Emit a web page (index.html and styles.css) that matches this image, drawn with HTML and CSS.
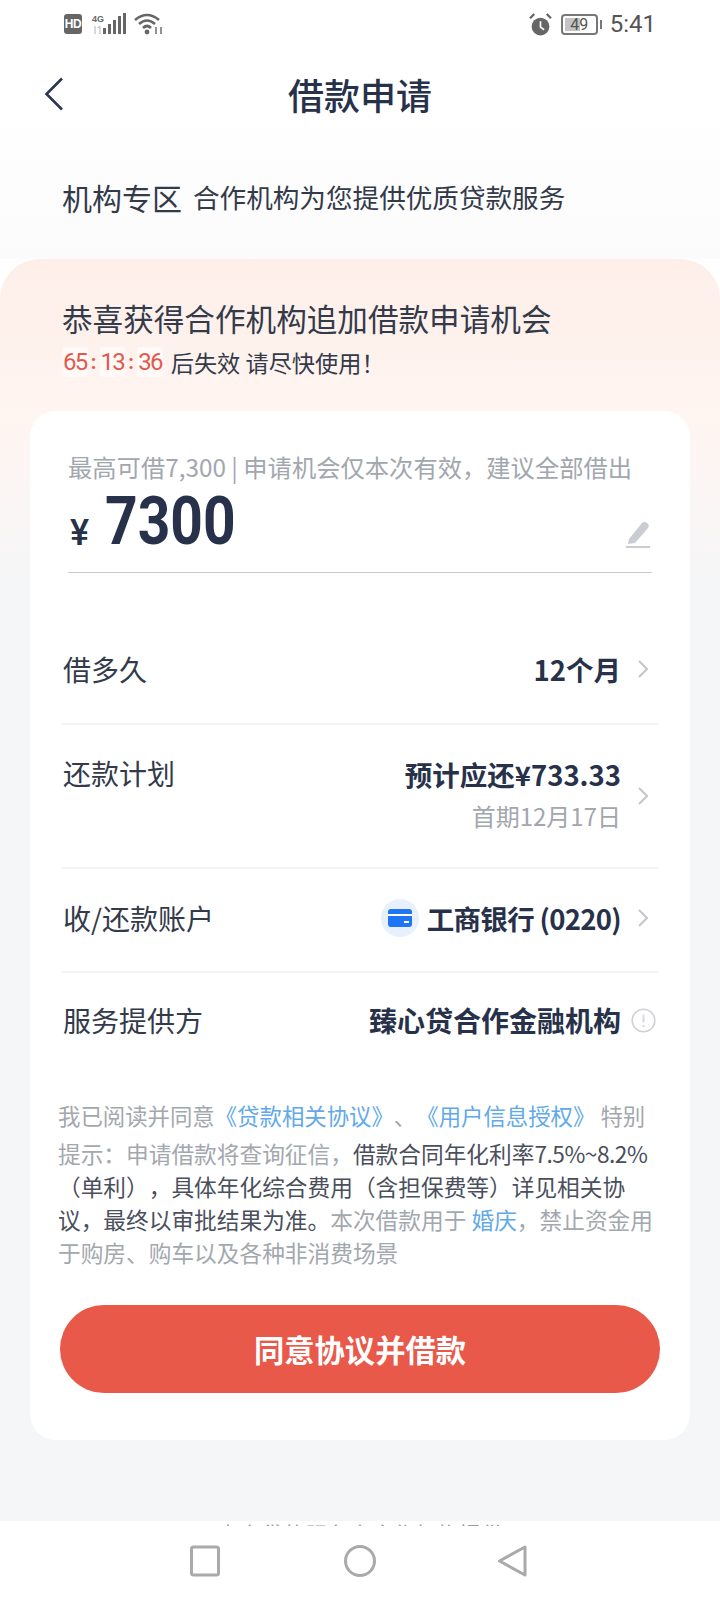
FILE: index.html

```html
<!DOCTYPE html>
<html lang="zh-CN">
<head>
  <meta charset="UTF-8">
  <title>借款申请</title>
  <link rel="stylesheet" href="styles.css">
</head>
<body>
<div class="page">
  <div class="top">
    <div class="status">
      <div class="status-left">
        <span class="hd">HD</span>
        <span class="net">4G</span>
        <svg class="signal" width="34" height="22" viewBox="0 0 34 22">
          <path d="M3 13v8M8 13v8M6 15l2-2" fill="none" stroke="#c8c8c8" stroke-width="1.4"/>
          <rect x="11" y="15" width="3" height="6" fill="#666"/>
          <rect x="16" y="11" width="3" height="10" fill="#666"/>
          <rect x="21" y="7" width="3" height="14" fill="#666"/>
          <rect x="26" y="3" width="3" height="18" fill="#666"/>
          <rect x="31" y="0" width="3" height="21" fill="#666"/>
        </svg>
        <svg class="wifi" width="30" height="22" viewBox="0 0 30 22">
          <path d="M1 7 Q13 -3 25 7" fill="none" stroke="#666" stroke-width="2.6"/>
          <path d="M5 11 Q13 4 21 11" fill="none" stroke="#666" stroke-width="2.6"/>
          <path d="M9 15 Q13 11 17 15" fill="none" stroke="#666" stroke-width="2.6"/>
          <circle cx="13" cy="19" r="2.4" fill="#666"/>
          <path d="M22 14v7M27 14v7" stroke="#666" stroke-width="1.4"/>
        </svg>
      </div>
      <div class="status-right">
        <svg width="23" height="23" viewBox="0 0 22 22">
          <circle cx="11" cy="13" r="8.5" fill="#666"/>
          <path d="M11 8v5.5l3.5 2.5" fill="none" stroke="#fff" stroke-width="1.6"/>
          <path d="M1 5l4-4M21 5l-4-4" stroke="#666" stroke-width="2.2"/>
        </svg>
        <span class="battery"><span class="battery-fill"></span><span class="battery-num">49</span></span>
        <span class="battery-nub"></span>
        <span class="clock">5:41</span>
      </div>
    </div>
    <div class="nav">
      <svg class="back" width="20" height="34" viewBox="0 0 20 34">
        <path d="M18 1.5 L2.5 17 L18 32.5" fill="none" stroke="#2b3650" stroke-width="2.6"/>
      </svg>
      <h1>借款申请</h1>
      <span></span>
    </div>
    <div class="zone">
      <span class="zone-name">机构专区</span>
      <span class="zone-sub">合作机构为您提供优质贷款服务</span>
    </div>
  </div>

  <div class="panel">
    <h2>恭喜获得合作机构追加借款申请机会</h2>
    <div class="timer">
      <span class="cell">65</span><span class="sep">:</span><span class="cell">13</span><span class="sep">:</span><span class="cell">36</span>
      <span class="timer-text">后失效 请尽快使用！</span>
    </div>

    <div class="card">
      <div class="amount-box">
        <div class="hint">最高可借7,300 | 申请机会仅本次有效，建议全部借出</div>
        <div class="amount">
          <span class="yen">¥</span>
          <span class="num">7300</span>
          <svg class="pencil" width="24" height="28" viewBox="0 0 24 28">
            <path d="M3 19 L16 3 Q18 1 21 3 Q24 5 22 8 L9 23 L2 24 Z" fill="#c9ccd1"/>
            <rect x="0" y="26" width="24" height="2" fill="#c9ccd1"/>
          </svg>
        </div>
      </div>

      <div class="rows">
        <div class="row row-term">
          <span class="label">借多久</span>
          <div class="value"><b>12个月</b>
            <svg class="arrow" width="10" height="18" viewBox="0 0 10 18"><path d="M1 1l8 8-8 8" fill="none" stroke="#c2c5ca" stroke-width="2"/></svg>
          </div>
        </div>
        <div class="row row-plan">
          <span class="label">还款计划</span>
          <div class="value">
            <div class="plan">
              <b>预计应还¥733.33</b>
              <span class="plan-sub">首期12月17日</span>
            </div>
            <svg class="arrow" width="10" height="18" viewBox="0 0 10 18"><path d="M1 1l8 8-8 8" fill="none" stroke="#c2c5ca" stroke-width="2"/></svg>
          </div>
        </div>
        <div class="row row-bank">
          <span class="label">收/还款账户</span>
          <div class="value">
            <span class="bank-icon">
              <svg width="24" height="18" viewBox="0 0 24 18">
                <rect width="24" height="18" rx="3" fill="#1f75f5"/>
                <rect y="5" width="24" height="2" fill="#fff"/>
                <rect x="16" y="12" width="5" height="2" fill="#fff"/>
              </svg>
            </span>
            <b>工商银行 (0220)</b>
            <svg class="arrow" width="10" height="18" viewBox="0 0 10 18"><path d="M1 1l8 8-8 8" fill="none" stroke="#c2c5ca" stroke-width="2"/></svg>
          </div>
        </div>
        <div class="row row-org">
          <span class="label">服务提供方</span>
          <div class="value"><b>臻心贷合作金融机构</b>
            <svg width="25" height="25" viewBox="0 0 25 25">
              <circle cx="12.5" cy="12.5" r="11.3" fill="none" stroke="#cfd1d5" stroke-width="1.6"/>
              <path d="M12.5 6.5v8" stroke="#d6d8db" stroke-width="2"/>
              <circle cx="12.5" cy="18" r="1.2" fill="#d6d8db"/>
            </svg>
          </div>
        </div>
      </div>

      <div class="agree">
        <p class="agree-first">我已阅读并同意<a>《贷款相关协议》</a>、<a>《用户信息授权》</a> 特别</p>
        <p>提示：申请借款将查询征信，<span class="dark">借款合同年化利率<span class="pct">7.5%~8.2%</span><br>（单利），具体年化综合费用（含担保费等）详见相关协<br>议，最终以审批结果为准。</span>本次借款用于 <a>婚庆</a>，禁止资金用<br>于购房、购车以及各种非消费场景</p>
      </div>

      <button class="submit">同意协议并借款</button>
    </div>
  </div>

  <div class="footnote">本次贷款服务由合作机构提供</div>

  <div class="navbar">
    <svg width="30" height="32" viewBox="0 0 30 32"><rect x="1.5" y="2" width="27" height="28" rx="2" fill="none" stroke="#aaa" stroke-width="3"/></svg>
    <svg width="32" height="32" viewBox="0 0 32 32"><circle cx="16" cy="16" r="14.5" fill="none" stroke="#aaa" stroke-width="3"/></svg>
    <svg class="nav-back" width="30" height="32" viewBox="0 0 30 32"><path d="M27 2 V30 L1.5 16 Z" fill="none" stroke="#aaa" stroke-width="3" stroke-linejoin="round"/></svg>
  </div>
</div>
</body>
</html>
```

FILE: styles.css

```css
* { box-sizing: border-box; }
body {
  margin: 0;
  font-family: "Noto Sans CJK SC", "Noto Sans", sans-serif;
  color: #27324a;
}
h1, h2, p { margin: 0; font-weight: normal; }
.page {
  width: 720px;
  height: 1600px;
  overflow: hidden;
  background: #fff;
}

/* top */
.top {
  height: 259px;
  background: linear-gradient(#fff 40%, #fbfbfb);
}
.status {
  height: 48px;
  display: flex;
  justify-content: space-between;
  align-items: center;
  padding: 0 64px 0 64px;
}
.status-left, .status-right { display: flex; align-items: center; }
.hd {
  width: 18px;
  height: 20px;
  background: #666;
  border-radius: 3px;
  color: #fff;
  font: bold 12px/20px "Liberation Sans", sans-serif;
  letter-spacing: -0.5px;
  text-align: center;
}
.net {
  align-self: flex-start;
  width: 0;
  margin: 1px 0 0 10px;
  font: bold 9px/10px "Liberation Sans", sans-serif;
  color: #666;
}
.wifi { margin-left: 8px; }
.battery {
  display: inline-block;
  position: relative;
  width: 37px;
  height: 21px;
  margin-left: 9px;
  border: 2px solid #777;
  border-radius: 4px;
}
.battery-fill {
  position: absolute;
  left: 2px;
  top: 2px;
  bottom: 2px;
  width: 15px;
  background: #c4c4c4;
}
.battery-num {
  position: absolute;
  inset: 0;
  font: 16px/17px "Roboto", sans-serif;
  text-align: center;
  color: #555;
}
.battery-nub {
  width: 2px;
  height: 9px;
  margin-left: 2px;
  background: #777;
}
.clock {
  margin-left: 8px;
  font: 24px/30px "Roboto", sans-serif;
  color: #555;
}
.nav {
  height: 92px;
  display: grid;
  grid-template-columns: 1fr auto 1fr;
  align-items: center;
  padding: 0 44px;
}
.nav h1 {
  font-size: 36px;
  line-height: 46px;
  font-weight: 500;
}
.zone {
  height: 113px;
  display: flex;
  align-items: center;
  gap: 11px;
  padding-left: 62px;
  color: #333a4a;
}
.zone-name { font-size: 30px; line-height: 40px; }
.zone-sub { font-size: 26.6px; line-height: 40px; }

/* panel */
.panel {
  height: 1262px;
  padding: 39px 30px 0;
  border-radius: 40px 40px 0 0;
  background: linear-gradient(#fdeee8, #fff5f1 160px, #f5f6f8 330px);
}
.panel h2 {
  margin-left: 32px;
  font-size: 30.6px;
  line-height: 40px;
  color: #333a4a;
}
.timer {
  display: flex;
  align-items: center;
  height: 36px;
  margin: 6px 0 31px 32px;
}
.cell {
  padding: 0 1px;
  background: #fffaf7;
  border-radius: 3px;
  color: #df5a4e;
  font: 24px/30px "Roboto", sans-serif;
  letter-spacing: -1.7px;
}
.sep {
  width: 12px;
  text-align: center;
  color: #df5a4e;
  font: bold 20px/30px "Roboto", sans-serif;
}
.timer-text {
  margin-left: 8px;
  font-size: 23.2px;
  line-height: 36px;
  color: #333a4a;
}

/* card */
.card {
  height: 1029px;
  padding-top: 39px;
  background: #fff;
  border-radius: 26px;
}
.amount-box {
  margin: 0 38px;
  border-bottom: 1.5px solid #ccc;
}
.hint {
  font-size: 24.3px;
  line-height: 34px;
  color: #a2a6ae;
  white-space: nowrap;
}
.amount {
  display: flex;
  align-items: center;
  height: 88px;
}
.yen {
  width: 37px;
  padding: 10px 0 0 2px;
  font: 500 36px/50px "Roboto", sans-serif;
}
.num {
  display: inline-block;
  padding-bottom: 14px;
  font: bold 67px/80px "Roboto", sans-serif;
  transform: scaleX(0.85);
  transform-origin: left center;
}
.pencil { margin: 12px 2px 0 auto; }

.rows { margin: 42px 32px 0 31px; }
.row {
  display: flex;
  justify-content: space-between;
  align-items: center;
  padding: 0 10px 0 2px;
  border-bottom: 2px solid #f4f4f5;
}
.row-term { height: 110px; }
.row-plan { height: 144px; }
.row-bank { height: 104px; padding-bottom: 4px; }
.row-org { height: 98px; border-bottom: 0; padding: 0 2px 4px 2px; }
.label {
  font-size: 28px;
  line-height: 40px;
  color: #333a4a;
}
.row-plan .label { align-self: flex-start; margin-top: 28px; }
.value {
  display: flex;
  align-items: center;
  gap: 17px;
  font-size: 27.5px;
  line-height: 40px;
}
.value b { font-weight: bold; }
.row-org .value { gap: 10px; }
.row-org b { font-size: 28px; }
.row-bank .value { gap: 8px; }
.row-bank b { letter-spacing: -0.7px; }
.row-bank .arrow { margin-left: 9px; }
.plan {
  display: flex;
  flex-direction: column;
  align-items: flex-end;
  margin-top: -2px;
}
.plan-sub {
  margin-top: 2px;
  font-size: 24px;
  color: #a2a6ae;
}
.bank-icon {
  width: 38px;
  height: 38px;
  display: flex;
  align-items: center;
  justify-content: center;
  border-radius: 50%;
  background: #e8f0fb;
}

.agree {
  margin: 28px 0 0 28px;
  font-size: 22.7px;
  line-height: 33px;
  color: #a3a7ae;
  white-space: nowrap;
  text-spacing-trim: space-all;
}
.agree-first { margin-bottom: 5px; font-size: 22.4px; }
.agree a { color: #62a9e8; }
.dark { color: #4a4f5c; }
.pct { letter-spacing: -0.5px; }

.submit {
  display: block;
  width: 600px;
  height: 88px;
  margin: 36px 0 0 30px;
  border: 0;
  border-radius: 44px;
  background: #e8594a;
  color: #fff;
  font: bold 30.3px/40px "Noto Sans CJK SC", sans-serif;
}

/* bottom */
.footnote {
  height: 5px;
  overflow: hidden;
  text-align: center;
  font-size: 22px;
  line-height: 24px;
  color: #9a9a9a;
}
.navbar {
  height: 74px;
  display: flex;
  align-items: center;
  padding: 0 0 4px 190px;
  gap: 124px;
}
.nav-back { margin-left: -2px; }
```
